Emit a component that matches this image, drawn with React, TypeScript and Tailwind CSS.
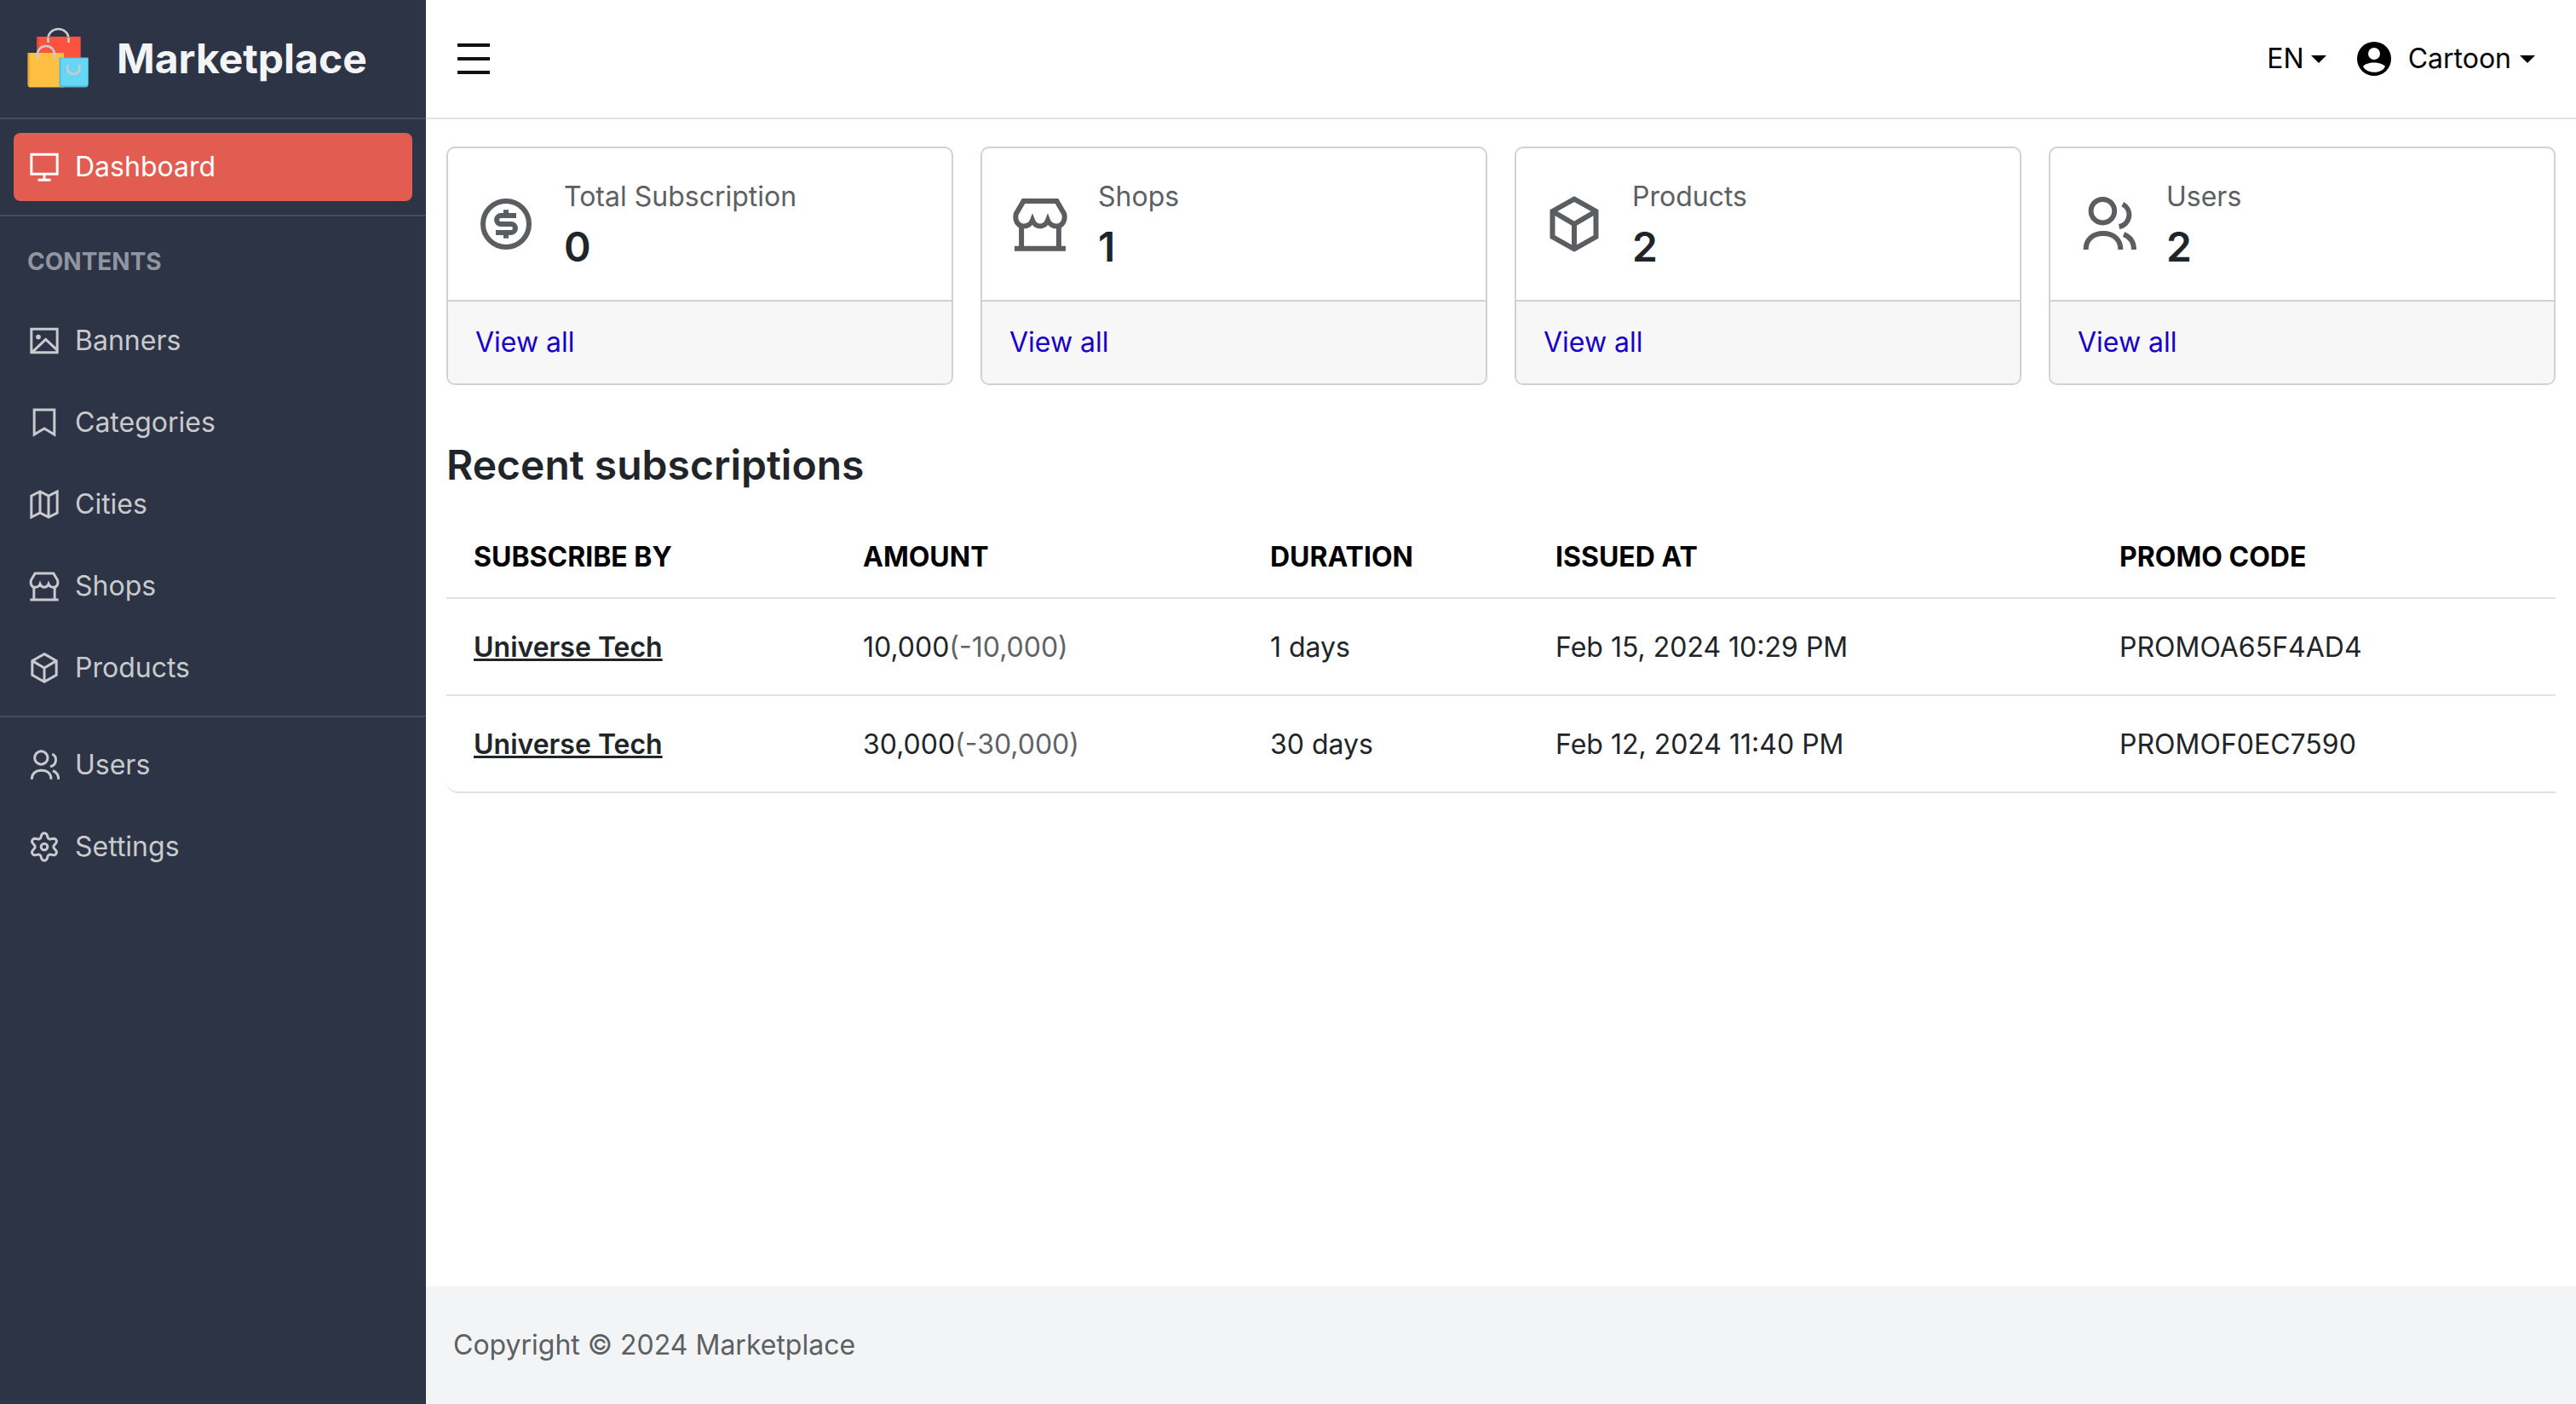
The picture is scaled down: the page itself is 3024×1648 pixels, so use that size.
import React from "react";

type P = { size?: number; sw?: number; className?: string };

function Svg({ size = 40, sw = 1.8, className = "", children }: P & { children: React.ReactNode }) {
  return (
    <svg width={size} height={size} viewBox="0 0 24 24" fill="none" stroke="currentColor" strokeWidth={sw} className={"shrink-0 " + className}>
      {children}
    </svg>
  );
}

const Dollar = (p: P) => (
  <Svg {...p}>
    <circle cx="12" cy="12" r="9" />
    <path d="M16 8.7H10a1.65 1.65 0 0 0 0 3.3h4a1.65 1.65 0 0 1 0 3.3H8M12 6.4v2.3M12 15.3v2.3" />
  </Svg>
);
const Shop = (p: P) => (
  <Svg {...p}>
    <path d="M5.5 3H18.5L21.4 8C22 10.5 20.8 12.8 18.5 12.8C16.8 12.8 15.5 11.8 15 10.5C14.5 11.8 13.5 12.8 12 12.8C10.5 12.8 9.5 11.8 9 10.5C8.5 11.8 7.2 12.8 5.5 12.8C3.2 12.8 2 10.5 2.6 8Z" />
    <path d="M4.7 12.8V21M19.3 12.8V21M2 21.6H22" />
  </Svg>
);
const Box = (p: P) => (
  <Svg {...p}>
    <path d="M12 2.2L20.5 7V17L12 21.8L3.5 17V7ZM3.5 7L12 12L20.5 7M12 12V21.8" />
  </Svg>
);
const Users = (p: P) => (
  <Svg {...p}>
    <circle cx="9.8" cy="6.9" r="4.6" />
    <path d="M17.6 4.2A4.7 4.7 0 0 1 16.2 13M3.2 22C3.2 18 6 15.7 10 15.7C14 15.7 16.8 18 16.8 22M18 16C20.5 17 22 19 22 22" />
  </Svg>
);
const Monitor = (p: P) => (
  <Svg {...p}>
    <path d="M2.9 3.2H21.1V17H2.9ZM12 17V21M7.5 21.2H16.5" />
  </Svg>
);
const ImageIcon = (p: P) => (
  <Svg {...p}>
    <path d="M2.9 3.8H21.1V20.2H2.9ZM3.5 20L13 11L21 18.5" />
    <circle cx="7.8" cy="9.3" r="1.7" fill="currentColor" stroke="none" />
  </Svg>
);
const Bookmark = (p: P) => (
  <Svg {...p}>
    <path d="M4.9 3H19.1V20.4L12 16.2L4.9 20.4Z" />
  </Svg>
);
const MapIcon = (p: P) => (
  <Svg {...p}>
    <path d="M2.9 6L9 3L15 6L21.1 3V18L15 21L9 18L2.9 21ZM9 3V18M15 6V21" />
  </Svg>
);

const cogPath = Array.from({ length: 72 }, (_, i) => {
  const t = (i / 72) * Math.PI * 2;
  const r = 8.1 + 1.5 * Math.max(-1, Math.min(1, 1.3 * Math.cos(6 * t)));
  return `${i === 0 ? "M" : "L"}${(12 + r * Math.sin(t)).toFixed(2)} ${(12 - r * Math.cos(t)).toFixed(2)}`;
}).join("") + "Z";

const Cog = (p: P) => (
  <Svg {...p}>
    <path d={cogPath} strokeLinejoin="round" />
    <circle cx="12" cy="12" r="2.3" />
  </Svg>
);

function Logo() {
  return (
    <svg width="100" height="100" viewBox="0 0 100 100" fill="none" className="shrink-0">
      <path d="M36.5 31V26a12 11 0 0 1 24 0V31" stroke="#c9cccf" strokeWidth="2.6" />
      <rect x="23.3" y="24" width="51.4" height="40" fill="#ff5240" />
      <rect x="23.3" y="24" width="2.5" height="40" fill="#e8483a" />
      <path d="M36.5 25V31M60.5 25V31" stroke="#c9cccf" strokeWidth="2.6" />
      <path d="M12.7 43H55V83.5H15.7a3 3 0 0 1-3-3Z" fill="#ffbf43" />
      <path d="M12.7 43H15V83.5a3 3 0 0 1-2.3-3Z" fill="#f0ad35" />
      <path d="M24 50V45a10 10 0 0 1 20 0V50" stroke="#c9cccf" strokeWidth="2.6" />
      <path d="M49.5 48.5H83.5V80.5a3 3 0 0 1-3 3H52.5a3 3 0 0 1-3-3Z" fill="#52bcd6" />
      <path d="M51.5 49.5H83.5V80a2 2 0 0 1-2 1.5H53.5a2 2 0 0 1-2-1.5Z" fill="#66d6f5" />
      <path d="M59.3 57V62a7 6 0 0 0 14 0V57" stroke="#c9cccf" strokeWidth="2.6" />
    </svg>
  );
}

function NavItem({ icon, label }: { icon: React.ReactNode; label: string }) {
  return (
    <div className="flex items-center h-[96px] pl-[32px] gap-[16px] text-[32px] text-[#c8cacd]">
      {icon}
      <span>{label}</span>
    </div>
  );
}

function StatCard({ icon, title, value }: { icon: React.ReactNode; title: string; value: string }) {
  return (
    <div className="flex-1 h-[280px] border-2 border-[#d1d1d1] rounded-[10px] overflow-hidden flex flex-col">
      <div className="h-[178px] flex items-center pl-[32px] gap-[32px] text-[#5a5e61]">
        {icon}
        <div className="flex flex-col">
          <span className="text-[32px] leading-[48px] text-[#5c6063]">{title}</span>
          <span className="text-[48px] leading-[58px] font-semibold text-[#212529] mt-[6px]">{value}</span>
        </div>
      </div>
      <div className="flex-1 border-t-2 border-[#d1d1d1] bg-[#f7f7f7] flex items-center pl-[32px]">
        <a className="text-[32px] text-[#1800c8]">View all</a>
      </div>
    </div>
  );
}

const rows = [
  { amount: "10,000", off: "(-10,000)", days: "1 days", at: "Feb 15, 2024 10:29 PM", code: "PROMOA65F4AD4" },
  { amount: "30,000", off: "(-30,000)", days: "30 days", at: "Feb 12, 2024 11:40 PM", code: "PROMOF0EC7590" },
];

export default function App() {
  return (
    <div className="flex h-[1648px] w-[3024px] overflow-hidden bg-white [font-family:Inter,sans-serif]">
      <aside className="w-[500px] shrink-0 bg-[#2c3446] flex flex-col">
        <div className="h-[140px] border-b-2 border-[#434c5c] flex items-center pl-[20px] gap-[17px]">
          <Logo />
          <span className="text-[48px] font-bold text-[#f3f4f6]">Marketplace</span>
        </div>
        <div className="h-[114px] border-b-2 border-[#434c5c] px-[16px] pt-[16px]">
          <div className="h-[80px] rounded-[8px] bg-[#e25c52] flex items-center pl-[16px] gap-[16px] text-[32px] text-white">
            <Monitor />
            <span>Dashboard</span>
          </div>
        </div>
        <div className="pl-[32px] pt-[35px] pb-[27px] text-[28px] leading-[36px] font-bold text-[#9095a0]">CONTENTS</div>
        <NavItem icon={<ImageIcon />} label="Banners" />
        <NavItem icon={<Bookmark />} label="Categories" />
        <NavItem icon={<MapIcon />} label="Cities" />
        <NavItem icon={<Shop />} label="Shops" />
        <NavItem icon={<Box />} label="Products" />
        <div className="h-[2px] bg-[#434c5c] mt-[8px] mb-[8px]" />
        <NavItem icon={<Users />} label="Users" />
        <NavItem icon={<Cog />} label="Settings" />
      </aside>

      <div className="flex-1 flex flex-col min-w-0">
        <header className="h-[140px] shrink-0 border-b-2 border-[#e2e3e5] flex items-center pl-[36px] pr-[48px] text-[32px] text-black">
          <svg width="40" height="36" viewBox="0 0 40 36" fill="none" stroke="#111" strokeWidth="4" className="shrink-0">
            <path d="M1 2H39M1 18H39M1 34H39" />
          </svg>
          <span className="ml-auto">EN</span>
          <span className="ml-[8px] border-x-[9px] border-x-transparent border-t-[9px] border-t-black" />
          <svg width="40" height="40" viewBox="0 0 40 40" className="ml-[36px] shrink-0">
            <circle cx="20" cy="20" r="20" fill="#000" />
            <circle cx="20" cy="14" r="7" fill="#fff" />
            <path d="M7 29C11 23 29 23 33 29C29 38 11 38 7 29Z" fill="#fff" />
          </svg>
          <span className="ml-[20px]">Cartoon</span>
          <span className="ml-[10px] border-x-[9px] border-x-transparent border-t-[9px] border-t-black" />
        </header>

        <main className="flex-1 px-[24px] pt-[32px]">
          <div className="flex gap-[32px]">
            <StatCard icon={<Dollar size={72} sw={2} />} title="Total Subscription" value="0" />
            <StatCard icon={<Shop size={72} sw={2} />} title="Shops" value="1" />
            <StatCard icon={<Box size={72} sw={2} />} title="Products" value="2" />
            <StatCard icon={<Users size={72} sw={2} />} title="Users" value="2" />
          </div>
          <h2 className="mt-[62px] text-[48px] leading-[64px] font-semibold text-[#212529]">Recent subscriptions</h2>
          <table className="mt-[29px] w-full border-separate border-spacing-0 text-[32px] text-[#212529] table-fixed">
            <colgroup>
              <col className="w-[457px]" />
              <col className="w-[478px]" />
              <col className="w-[335px]" />
              <col className="w-[662px]" />
              <col />
            </colgroup>
            <thead>
              <tr>
                {["SUBSCRIBE BY", "AMOUNT", "DURATION", "ISSUED AT", "PROMO CODE"].map((h) => (
                  <th key={h} className="h-[96px] pl-[32px] text-left font-bold text-black border-b-2 border-[#dee2e6]">{h}</th>
                ))}
              </tr>
            </thead>
            <tbody>
              {rows.map((r, i) => {
                const last = i === rows.length - 1;
                const td = "h-[114px] pl-[32px] pt-[2px] border-b-2 border-[#dee2e6]";
                return (
                  <tr key={r.code}>
                    <td className={td + (last ? " rounded-bl-[14px]" : "")}>
                      <a className="font-semibold underline">Universe Tech</a>
                    </td>
                    <td className={td}>
                      {r.amount}
                      <span className="text-[#5f6368]">{r.off}</span>
                    </td>
                    <td className={td}>{r.days}</td>
                    <td className={td}>{r.at}</td>
                    <td className={td}>{r.code}</td>
                  </tr>
                );
              })}
            </tbody>
          </table>
        </main>

        <footer className="h-[138px] shrink-0 bg-[#f3f4f6] flex items-center pl-[32px] text-[32px] text-[#5c6063]">
          Copyright © 2024 Marketplace
        </footer>
      </div>
    </div>
  );
}
